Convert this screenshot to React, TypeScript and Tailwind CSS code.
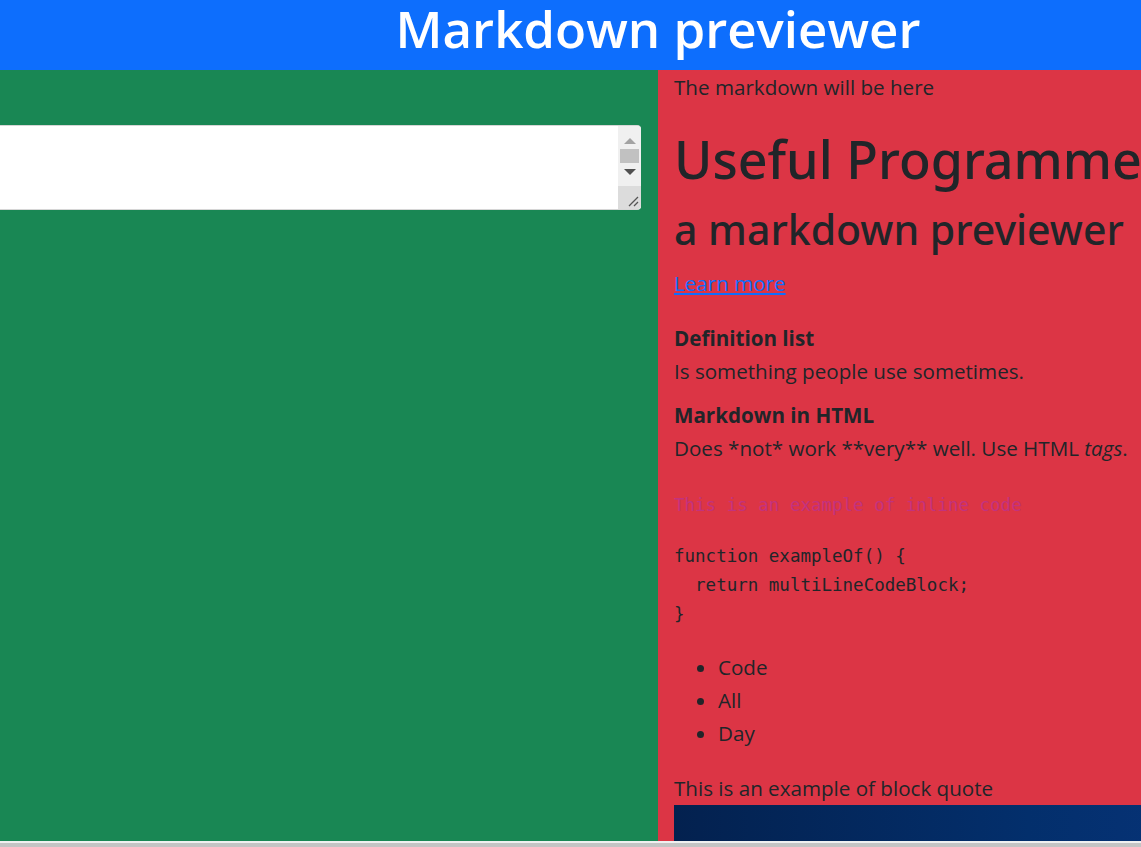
const sans = "font-['Open_Sans','Noto_Sans',sans-serif]";

function FakeTextarea() {
  return (
    <div className="flex h-[85px] rounded-r-[4px] border-y border-[#d6d6d6] bg-white overflow-hidden">
      <div className="flex-1" />
      <div className="flex w-[23px] flex-col bg-[#f0f0f0]">
        <div className="flex h-[20px] items-end justify-center pb-[2px]">
          <div className="h-0 w-0 border-x-[6px] border-b-[6px] border-x-transparent border-b-[#a3a3a3]" />
        </div>
        <div className="mx-[2px] mt-[3px] h-[14px] bg-[#c1c1c1]" />
        <div className="flex h-[16px] items-center justify-center pt-[2px]">
          <div className="h-0 w-0 border-x-[6px] border-t-[6px] border-x-transparent border-t-[#505050]" />
        </div>
        <div className="mt-auto flex h-[23px] items-end justify-end bg-[#dcdcdc] p-[2px]">
          <svg width="12" height="12" viewBox="0 0 12 12">
            <path d="M2 11 L11 2 M7 11 L11 7" stroke="#555" strokeWidth="1.3" />
          </svg>
        </div>
      </div>
    </div>
  );
}

function Preview() {
  return (
    <div className="pt-[1px] text-[20.6px] leading-[33px] text-[#212529]">
      <p className="mb-[22px]">The markdown will be here</p>
      <h1 className="mb-[11px] whitespace-nowrap font-['Noto_Sans',sans-serif] text-[52px] font-medium leading-[66px]">
        Useful Programmers
      </h1>
      <h2 className="mb-[11px] whitespace-nowrap font-['Noto_Sans',sans-serif] text-[41px] font-medium leading-[53px]">
        a markdown previewer
      </h2>
      <p className="mb-[22px]">
        <a href="#" className="text-[#0d6efd] underline">
          Learn more
        </a>
      </p>
      <dl className="mb-[22px]">
        <dt className="font-bold">Definition list</dt>
        <dd className="mb-[11px]">Is something people use sometimes.</dd>
        <dt className="font-bold">Markdown in HTML</dt>
        <dd>
          Does *not* work **very** well. Use HTML <em>tags</em>.
        </dd>
      </dl>
      <p className="mb-[22px]">
        <code className="font-['DejaVu_Sans_Mono',monospace] text-[17.5px] leading-none text-[#c2327f]">
          This is an example of inline code
        </code>
      </p>
      <pre className="mb-[22px] font-['DejaVu_Sans_Mono',monospace] text-[17.5px] leading-[29px]">
{`function exampleOf() {
  return multiLineCodeBlock;
}`}
      </pre>
      <ul className="mb-[22px] list-disc pl-[44px]">
        <li>Code</li>
        <li>All</li>
        <li>Day</li>
      </ul>
      <p>This is an example of block quote</p>
      <div className="h-[200px] w-full bg-gradient-to-r from-[#03214f] via-[#032f6c] to-[#0c3784]" />
    </div>
  );
}

export default function App() {
  return (
    <div className={`flex h-[847px] w-[1141px] flex-col overflow-hidden bg-white ${sans}`}>
      <div className="flex-1 overflow-hidden">
        <div className="-ml-[84px] w-[1484px]">
          <header className="h-[70px] overflow-hidden bg-[#0d6efd] text-center">
            <h1 className="-mt-[5px] text-[51px] font-semibold leading-[66px] text-white">
              Markdown previewer
            </h1>
          </header>
          <div className="flex h-[771px]">
            <div className="w-1/2 bg-[#198754] pl-4 pr-[17px] pt-[55px]">
              <FakeTextarea />
            </div>
            <div className="w-1/2 overflow-hidden bg-[#dc3545] px-4">
              <Preview />
            </div>
          </div>
        </div>
      </div>
      <div className="h-[2px] bg-[#f0f0f0]" />
      <div className="h-[4px] bg-[#c4c4c4]" />
    </div>
  );
}
